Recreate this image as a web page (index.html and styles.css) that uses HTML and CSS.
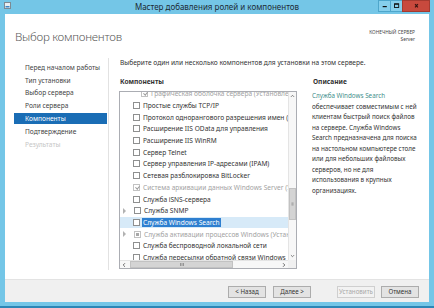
FILE: index.html
```html
<!DOCTYPE html>
<html lang="ru">
  <head>
    <meta charset="UTF-8" />
    <meta name="viewport" content="width=device-width, initial-scale=1.0" />
    <title>Мастер добавления ролей и компонентов</title>
    <link rel="stylesheet" href="styles.css">
  </head>
  <body>
    <div class="window">
      <div class="titlebar">
        <svg class="app-icon" width="7" height="7" viewBox="0 0 7 7">
          <rect x="0.5" y="0.5" width="6" height="6" fill="#e8eef2" stroke="#7d8a93" />
          <rect x="1.5" y="4" width="4" height="1.5" fill="#3c86c4" />
        </svg>
        <div class="title">Мастер добавления ролей и компонентов</div>
        <div class="caption-buttons">
          <div class="cap-btn">
            <svg width="12" height="12" viewBox="0 0 12 12"><rect x="4" y="6" width="4.5" height="1.3" fill="#111" /></svg>
          </div>
          <div class="cap-btn">
            <svg width="12" height="12" viewBox="0 0 12 12"><rect x="3.8" y="3.6" width="4.6" height="4" fill="none" stroke="#111" stroke-width="1" /><rect x="3.8" y="3.4" width="4.6" height="1.2" fill="#111" /></svg>
          </div>
          <div class="cap-btn close">
            <svg width="28" height="12" viewBox="0 0 28 12"><path d="M13 4 L16 7.5 M16 4 L13 7.5" stroke="#3a1410" stroke-width="1.3" /></svg>
          </div>
        </div>
      </div>

      <div class="client">
        <div class="header">
          <h1>Выбор компонентов</h1>
          <div class="target">
            <div>КОНЕЧНЫЙ СЕРВЕР</div>
            <div>Server</div>
          </div>
        </div>

        <div class="body">
          <ul class="steps">
            <li>Перед началом работы</li>
            <li>Тип установки</li>
            <li>Выбор сервера</li>
            <li>Роли сервера</li>
            <li class="current">Компоненты</li>
            <li>Подтверждение</li>
            <li class="disabled">Результаты</li>
          </ul>

          <div class="main">
            <p class="intro">Выберите один или несколько компонентов для установки на этом сервере.</p>
            <div class="columns">
              <div class="components">
                <div class="label">Компоненты</div>
                <div class="listbox">
                  <div class="items">
                    <div class="row child grayed"><span class="exp"></span><span class="cb checked"></span><span class="text">Графическая оболочка сервера (Установлено)</span></div>
                    <div class="row"><span class="exp"></span><span class="cb"></span><span class="text">Простые службы TCP/IP</span></div>
                    <div class="row"><span class="exp"></span><span class="cb"></span><span class="text">Протокол однорангового разрешения имен (PNRP)</span></div>
                    <div class="row"><span class="exp"></span><span class="cb"></span><span class="text">Расширение IIS OData для управления</span></div>
                    <div class="row"><span class="exp"></span><span class="cb"></span><span class="text">Расширение IIS WinRM</span></div>
                    <div class="row"><span class="exp"></span><span class="cb"></span><span class="text">Сервер Telnet</span></div>
                    <div class="row"><span class="exp"></span><span class="cb"></span><span class="text">Сервер управления IP-адресами (IPAM)</span></div>
                    <div class="row"><span class="exp"></span><span class="cb"></span><span class="text">Сетевая разблокировка BitLocker</span></div>
                    <div class="row grayed"><span class="exp"></span><span class="cb checked"></span><span class="text">Система архивации данных Windows Server (Установлено)</span></div>
                    <div class="row"><span class="exp"></span><span class="cb"></span><span class="text">Служба iSNS-сервера</span></div>
                    <div class="row"><span class="exp arrow"></span><span class="cb"></span><span class="text">Служба SNMP</span></div>
                    <div class="row selected"><span class="exp"></span><span class="cb"></span><span class="text"><span class="hl">Служба Windows Search</span></span></div>
                    <div class="row grayed"><span class="exp arrow"></span><span class="cb partial"></span><span class="text">Служба активации процессов Windows (Установлено)</span></div>
                    <div class="row"><span class="exp"></span><span class="cb"></span><span class="text">Служба беспроводной локальной сети</span></div>
                    <div class="row"><span class="exp"></span><span class="cb"></span><span class="text">Служба пересылки обратной связи Windows</span></div>
                  </div>

                  <div class="vscroll">
                    <div class="sb-arrow">
                      <svg width="8" height="8" viewBox="0 0 8 8"><path d="M2.2 5 L4 3.2 L5.8 5" fill="none" stroke="#606060" stroke-width="0.9" /></svg>
                    </div>
                    <div class="track">
                      <div class="vthumb">
                        <svg width="7" height="6" viewBox="0 0 7 6"><path d="M2 1.5 H5 M2 3 H5 M2 4.5 H5" stroke="#7a7a7a" stroke-width="0.7" /></svg>
                      </div>
                    </div>
                    <div class="sb-arrow">
                      <svg width="8" height="8" viewBox="0 0 8 8"><path d="M2.2 3 L4 4.8 L5.8 3" fill="none" stroke="#606060" stroke-width="0.9" /></svg>
                    </div>
                  </div>

                  <div class="hscroll">
                    <div class="sb-arrow">
                      <svg width="8" height="8" viewBox="0 0 8 8"><path d="M5 2.2 L3.2 4 L5 5.8" fill="none" stroke="#606060" stroke-width="0.9" /></svg>
                    </div>
                    <div class="track">
                      <div class="hthumb">
                        <svg width="6" height="7" viewBox="0 0 6 7"><path d="M1.5 2 V5 M3 2 V5 M4.5 2 V5" stroke="#7a7a7a" stroke-width="0.7" /></svg>
                      </div>
                    </div>
                    <div class="sb-arrow">
                      <svg width="8" height="8" viewBox="0 0 8 8"><path d="M3 2.2 L4.8 4 L3 5.8" fill="none" stroke="#606060" stroke-width="0.9" /></svg>
                    </div>
                  </div>

                  <div class="corner"></div>
                </div>
              </div>

              <div class="description">
                <div class="label">Описание</div>
                <p>
                  <span class="link">Служба Windows Search</span><br>
                  обеспечивает совместимым с ней<br>
                  клиентам быстрый поиск файлов<br>
                  на сервере. Служба Windows<br>
                  Search предназначена для поиска<br>
                  на настольном компьютере столе<br>
                  или для небольших файловых<br>
                  серверов, но не для<br>
                  использования в крупных<br>
                  организациях.
                </p>
              </div>
            </div>
          </div>
        </div>

        <div class="footer">
          <button class="btn">&lt; Назад</button>
          <button class="btn">Далее &gt;</button>
          <button class="btn install" disabled>Установить</button>
          <button class="btn">Отмена</button>
        </div>
      </div>
    </div>
  </body>
</html>
```

FILE: styles.css
```css
* {
  box-sizing: border-box;
}
body {
  margin: 0;
  font-family: "Noto Sans", "Open Sans", sans-serif;
  color: #333;
}
.window {
  width: 434px;
  height: 308px;
  background-color: #74c6e7;
  border-bottom: 2px solid #2c86b6;
  display: flex;
  flex-direction: column;
}

/* title bar */
.titlebar {
  height: 14px;
  flex-shrink: 0;
  display: grid;
  grid-template-columns: 1fr auto 1fr;
  align-items: start;
}
.app-icon {
  margin: 2px 0 0 4px;
}
.title {
  font-size: 8px;
  line-height: 14px;
  color: #1d2b34;
}
.caption-buttons {
  justify-self: end;
  display: flex;
  margin-right: 4px;
}
.cap-btn {
  width: 13px;
  height: 12px;
  background-color: #86cfec;
  border: 1px solid #4ea6cb;
  margin-right: -1px;
  display: flex;
  align-items: center;
  justify-content: center;
}
.cap-btn.close {
  width: 28px;
  margin-right: 0;
  background-color: #c8493d;
  border-color: #a43a30;
}

/* client area */
.client {
  flex: 1;
  margin: 0 5px 4px 5px;
  background-color: #fff;
  display: flex;
  flex-direction: column;
}
.header {
  height: 44px;
  flex-shrink: 0;
  display: flex;
  justify-content: space-between;
  align-items: flex-start;
  padding: 14px 14px 0 10px;
}
.header h1 {
  margin: 0;
  font-size: 11.6px;
  line-height: 17px;
  letter-spacing: -0.25px;
  font-weight: 300;
  color: #5a5a5a;
}
.target {
  margin-top: 1px;
  text-align: right;
  font-size: 4.8px;
  line-height: 7px;
  color: #444;
}

.body {
  flex: 1;
  display: flex;
  min-height: 0;
}
.steps {
  list-style: none;
  margin: 0 0 9px 0;
  width: 104px;
  padding: 3.8px 1px 0 9px;
  border-right: 1px solid #e2e2e2;
  font-size: 6.6px;
}
.steps li {
  height: 11px;
  line-height: 11px;
  margin-bottom: 1.8px;
  padding-left: 11px;
  color: #444;
  white-space: nowrap;
}
.steps li.current {
  background-color: #1a6db5;
  color: #fff;
}
.steps li.disabled {
  color: #c6c6c6;
}

.main {
  flex: 1;
  padding-left: 10px;
  font-size: 6.6px;
}
.intro {
  margin: 0;
  padding-left: 1px;
  line-height: 10px;
  color: #333;
  white-space: nowrap;
}
.columns {
  display: flex;
  margin-top: 9px;
}
.label {
  padding-left: 1px;
  line-height: 10px;
  font-weight: bold;
  color: #333;
  margin-bottom: 4px;
}

/* component list */
.components {
  width: 178px;
}
.listbox {
  width: 178px;
  height: 178px;
  border: 1px solid #abadb3;
  display: grid;
  grid-template-columns: 168px 8px;
  grid-template-rows: 168px 8px;
}
.items {
  overflow: hidden;
}
.row {
  height: 11.7px;
  display: flex;
  align-items: center;
  padding-left: 2px;
  white-space: nowrap;
}
.row:first-child {
  margin-top: -4px;
}
.row.child {
  padding-left: 10px;
}
.exp {
  width: 11px;
  height: 7px;
  flex-shrink: 0;
}
.exp.arrow {
  width: 0;
  height: 0;
  margin-right: 8px;
  margin-left: 1px;
  border-left: 3px solid #b2b2b2;
  border-top: 3px solid transparent;
  border-bottom: 3px solid transparent;
}
.cb {
  width: 7px;
  height: 7px;
  flex-shrink: 0;
  margin-right: 3px;
  border: 1px solid #8e8f8f;
  background-color: #fff;
  position: relative;
}
.cb.checked::after {
  content: "";
  position: absolute;
  left: 1.6px;
  top: 0;
  width: 1.6px;
  height: 3.2px;
  border-right: 1px solid #9a9a9a;
  border-bottom: 1px solid #9a9a9a;
  transform: rotate(40deg);
}
.cb.partial::after {
  content: "";
  position: absolute;
  left: 1px;
  top: 1px;
  width: 3px;
  height: 3px;
  background-color: #a8a8a8;
}
.grayed .cb {
  border-color: #c2c2c2;
}
.grayed .text {
  color: #a2a2a2;
}
.text {
  color: #333;
}
.row.selected {
  background-color: #d7eaf8;
}
.hl {
  background-color: #2e7fd0;
  color: #fff;
  padding: 0 1px;
  margin-left: -1px;
}

.vscroll {
  display: flex;
  flex-direction: column;
  background-color: #f7f7f7;
  border-left: 1px solid #e4e4e4;
}
.hscroll {
  display: flex;
  background-color: #f7f7f7;
  border-top: 1px solid #e4e4e4;
}
.sb-arrow {
  width: 8px;
  height: 8px;
  flex-shrink: 0;
  display: flex;
  align-items: center;
  justify-content: center;
}
.vscroll .sb-arrow {
  width: 7px;
}
.hscroll .sb-arrow {
  height: 7px;
}
.track {
  flex: 1;
}
.vthumb {
  margin-top: 88px;
  height: 32px;
  background-color: #d4d4d4;
  border: 1px solid #c2c2c2;
  display: flex;
  align-items: center;
  justify-content: center;
}
.hthumb {
  margin-left: 2px;
  width: 103px;
  height: 7px;
  background-color: #d4d4d4;
  border: 1px solid #c2c2c2;
  display: flex;
  align-items: center;
  justify-content: center;
}
.corner {
  background-color: #f0f0f0;
}

/* description */
.description {
  margin-left: 15px;
  width: 110px;
}
.description p {
  margin: 0;
  font-size: 6.3px;
  line-height: 10.5px;
  color: #333;
  white-space: nowrap;
}
.link {
  color: #3f8f8c;
}

/* footer */
.footer {
  height: 23px;
  flex-shrink: 0;
  border-top: 1px solid #e3e3e3;
  background-color: #f0f0f0;
  display: flex;
  justify-content: flex-end;
  align-items: flex-start;
  padding: 6px 10px 0 0;
}
.btn {
  width: 38px;
  height: 12px;
  padding: 0;
  margin-left: 7px;
  font-family: inherit;
  font-size: 6.2px;
  line-height: 10px;
  color: #333;
  background-color: #e3e3e3;
  border: 1px solid #acacac;
}
.btn.install {
  margin-left: 26px;
  color: #a8a8a8;
  background-color: #f2f2f2;
  border-color: #cfcfcf;
}
.btn.install + .btn {
  margin-left: 6px;
}
```
